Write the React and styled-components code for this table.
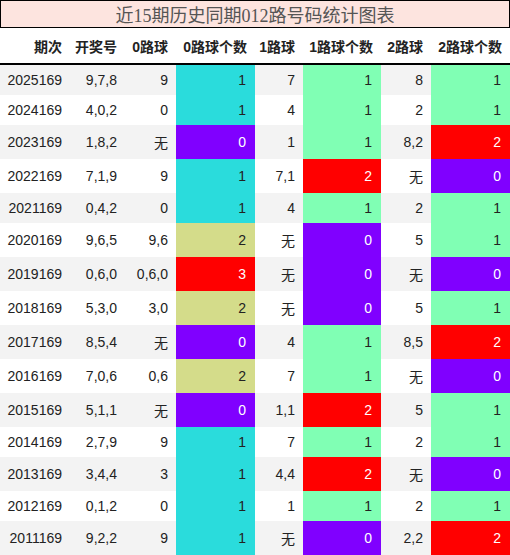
import React from 'react';
import styled, { createGlobalStyle } from 'styled-components';

const GlobalStyle = createGlobalStyle`
    html, body {
        margin: 0;
        padding: 0;
        background: #fff;
    }
    body {
        font-family: 'Liberation Sans', 'Noto Sans CJK SC', sans-serif;
        color: #222;
    }
`;

const COLS = '70px 55px 51px 79px 48px 78px 50px 79px';

const Wrapper = styled.div`
    width: 510px;
`;

const Title = styled.div`
    height: 26px;
    border: 1px solid #000;
    background-color: #fde4df;
    display: flex;
    align-items: center;
    justify-content: center;
    font-family: 'Liberation Serif', 'Noto Sans CJK SC', serif;
    font-size: 18px;
    color: #555;
`;

const HeaderRow = styled.div`
    display: grid;
    grid-template-columns: ${COLS};
    height: 34px;
    border-bottom: 2px solid #000;
    margin-top: 1px;
`;

const HeaderCell = styled.div`
    display: flex;
    align-items: center;
    justify-content: flex-end;
    padding-right: 8px;
    font-size: 14px;
    font-weight: 700;
    color: #222;
    white-space: nowrap;
`;

const Row = styled.div`
    display: grid;
    grid-template-columns: ${COLS};
    height: ${(p) => (p.$tall ? 34 : 30)}px;
    background-color: ${(p) => (p.$odd ? '#f3f3f3' : '#fff')};
`;

const Cell = styled.div`
    display: flex;
    align-items: center;
    justify-content: flex-end;
    padding-right: ${(p) => (p.$count ? 9 : 8)}px;
    font-size: 14px;
    white-space: nowrap;
    background-color: ${(p) => p.$bg || 'transparent'};
    color: ${(p) => (p.$light ? '#fff' : '#222')};
`;

// 0路: 0 紫 1 青 2 黄绿 3 红 ; 1路/2路: 0 紫 1 绿 2 红
const zeroColors = { 0: '#8000ff', 1: '#2adcdc', 2: '#d4dc8a', 3: '#ff0000' };
const otherColors = { 0: '#8000ff', 1: '#80ffb4', 2: '#ff0000' };
const isLight = (bg) => bg === '#8000ff' || bg === '#ff0000';

const headers = ['期次', '开奖号', '0路球', '0路球个数', '1路球', '1路球个数', '2路球', '2路球个数'];

const rows = [
    ['2025169', '9,7,8', '9', 1, '7', 1, '8', 1],
    ['2024169', '4,0,2', '0', 1, '4', 1, '2', 1],
    ['2023169', '1,8,2', '无', 0, '1', 1, '8,2', 2],
    ['2022169', '7,1,9', '9', 1, '7,1', 2, '无', 0],
    ['2021169', '0,4,2', '0', 1, '4', 1, '2', 1],
    ['2020169', '9,6,5', '9,6', 2, '无', 0, '5', 1],
    ['2019169', '0,6,0', '0,6,0', 3, '无', 0, '无', 0],
    ['2018169', '5,3,0', '3,0', 2, '无', 0, '5', 1],
    ['2017169', '8,5,4', '无', 0, '4', 1, '8,5', 2],
    ['2016169', '7,0,6', '0,6', 2, '7', 1, '无', 0],
    ['2015169', '5,1,1', '无', 0, '1,1', 2, '5', 1],
    ['2014169', '2,7,9', '9', 1, '7', 1, '2', 1],
    ['2013169', '3,4,4', '3', 1, '4,4', 2, '无', 0],
    ['2012169', '0,1,2', '0', 1, '1', 1, '2', 1],
    ['2011169', '9,2,2', '9', 1, '无', 0, '2,2', 2],
];

const CountCell = ({ value, palette }) => {
    const bg = palette[value];
    return (
        <Cell $count $bg={bg} $light={isLight(bg)}>
            {value}
        </Cell>
    );
};

export default function App() {
    return (
        <Wrapper>
            <GlobalStyle />
            <Title>近15期历史同期012路号码统计图表</Title>
            <HeaderRow>
                {headers.map((h) => (
                    <HeaderCell key={h}>{h}</HeaderCell>
                ))}
            </HeaderRow>
            {rows.map((r, i) => (
                <Row key={r[0]} $odd={i % 2 === 0} $tall={r.includes('无')}>
                    <Cell>{r[0]}</Cell>
                    <Cell>{r[1]}</Cell>
                    <Cell>{r[2]}</Cell>
                    <CountCell value={r[3]} palette={zeroColors} />
                    <Cell>{r[4]}</Cell>
                    <CountCell value={r[5]} palette={otherColors} />
                    <Cell>{r[6]}</Cell>
                    <CountCell value={r[7]} palette={otherColors} />
                </Row>
            ))}
        </Wrapper>
    );
}
